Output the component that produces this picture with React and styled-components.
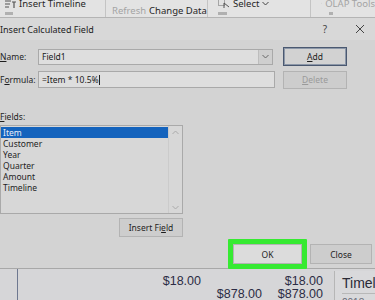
import React from "react";
import styled, { createGlobalStyle } from "styled-components";

const Global = createGlobalStyle`
  html, body { margin: 0; padding: 0; }
  body { width: 375px; height: 300px; overflow: hidden; background: #d4d4d4; }
`;

const Page = styled.div`
  width: 375px;
  height: 300px;
  overflow: hidden;
  display: flex;
  flex-direction: column;
  font-family: "Noto Sans", "DejaVu Sans", sans-serif;
  color: #1e1e1e;
`;

const Ribbon = styled.div`
  height: 17px;
  flex: none;
  display: flex;
  background: #e3e3e3;
  border-bottom: 1px solid #b4b4b4;
  overflow: hidden;
`;

const RGroup = styled.div`
  width: ${(p) => p.$w}px;
  flex: none;
  border-right: ${(p) => (p.$last ? "none" : "1px solid #c4c4c4")};
  display: flex;
  flex-direction: column;
  padding-left: ${(p) => p.$pl}px;
  box-sizing: border-box;
`;

const RLine = styled.div`
  display: flex;
  align-items: center;
  gap: 3px;
  height: 11px;
  flex: none;
  margin-top: ${(p) => p.$mt || 0}px;
  font-size: 9.5px;
  line-height: 11px;
  white-space: nowrap;
`;

const RText = styled.span`
  color: ${(p) => (p.$dim ? "#a4a4a4" : "#262626")};
`;

const MiniIcon = styled.span`
  display: inline-block;
  flex: none;
  width: ${(p) => p.$w || 9}px;
  height: 3px;
  background: #9a9a9a;
  opacity: 0.7;
  margin-left: ${(p) => p.$ml || 0}px;
  margin-top: ${(p) => p.$mt || 0}px;
`;

const Dialog = styled.div`
  flex: none;
  height: 250px;
  background: #d3d3d3;
  display: flex;
  flex-direction: column;
  border-bottom: 1px solid #a8a8a8;
`;

const TitleBar = styled.div`
  height: 22px;
  flex: none;
  display: flex;
  align-items: center;
  background: #d8d8d8;
  font-size: 9px;
  color: #222;
`;

const Title = styled.div`
  flex: 1;
`;

const TitleBtn = styled.div`
  width: ${(p) => p.$w}px;
  text-align: center;
  font-size: ${(p) => p.$fs || 10}px;
  color: #444;
  display: flex;
  justify-content: center;
`;

const Body = styled.div`
  display: flex;
  flex-direction: column;
  padding-top: 7px;
`;

const Row = styled.div`
  display: flex;
  align-items: center;
  height: ${(p) => p.$h}px;
  margin-top: ${(p) => p.$mt || 0}px;
`;

const Label = styled.div`
  width: 38px;
  flex: none;
  font-size: 8.5px;
  line-height: 11px;
  color: #1e1e1e;
  white-space: nowrap;
`;

const Field = styled.div`
  width: ${(p) => p.$w}px;
  height: ${(p) => p.$h}px;
  box-sizing: border-box;
  flex: none;
  border: 1px solid #a9a9a9;
  background: #dedede;
  display: flex;
  align-items: center;
  font-size: 8.5px;
  padding-left: 3px;
  color: #1a1a1a;
`;

const FieldText = styled.span`
  flex: 1;
`;

const Caret = styled.span`
  display: inline-block;
  width: 1px;
  height: 10px;
  background: #222;
`;

const Drop = styled.div`
  width: 13px;
  align-self: stretch;
  border-left: 1px solid #bdbdbd;
  background: #cfcfcf;
  display: flex;
  align-items: center;
  justify-content: center;
`;

const Btn = styled.div`
  width: ${(p) => p.$w}px;
  height: ${(p) => p.$h}px;
  box-sizing: border-box;
  flex: none;
  margin-left: ${(p) => p.$ml || 0}px;
  border: 1px solid ${(p) => (p.$primary ? "#4a5870" : "#b3b3b3")};
  box-shadow: ${(p) => (p.$primary ? "inset 0 0 0 1px #8c97a8" : "none")};
  background: ${(p) => p.$bg || "#cdcdcd"};
  display: flex;
  align-items: center;
  justify-content: center;
  font-size: 8.5px;
  color: ${(p) => (p.$dim ? "#9a9a9a" : "#1e1e1e")};
`;

const FieldsLabel = styled.div`
  font-size: 8.5px;
  margin-top: 22px;
  height: 11px;
  line-height: 11px;
`;

const ListBox = styled.div`
  width: 183px;
  height: 89px;
  margin-top: 3px;
  box-sizing: border-box;
  border: 1px solid #a9a9a9;
  background: #d7d7d7;
  display: flex;
`;

const ListItems = styled.div`
  flex: 1;
  padding-top: 1px;
`;

const ListItem = styled.div`
  height: 11px;
  line-height: 11px;
  font-size: 8.5px;
  padding-left: 2px;
  color: ${(p) => (p.$sel ? "#e8eef8" : "#1e1e1e")};
  background: ${(p) => (p.$sel ? "#1463bd" : "transparent")};
`;

const Scroll = styled.div`
  width: 14px;
  display: flex;
  flex-direction: column;
  justify-content: space-between;
  align-items: center;
  border-left: 1px solid #cbcbcb;
  padding: 4px 0 3px;
  box-sizing: border-box;
`;

const InsertRow = styled.div`
  width: 183px;
  display: flex;
  justify-content: flex-end;
  margin-top: 4px;
`;

const BottomRow = styled.div`
  display: flex;
  align-items: center;
  margin-top: 2px;
  padding-left: 228px;
`;

const Highlight = styled.div`
  width: 79px;
  height: 30px;
  box-sizing: border-box;
  border: 5px solid #36ea32;
  border-radius: 1px;
  display: flex;
`;

const Sheet = styled.div`
  flex: 1;
  display: flex;
  background: #d6d6d8;
`;

const Gutter = styled.div`
  width: 17px;
  flex: none;
  border-right: 1px solid #6e7890;
`;

const Cells = styled.div`
  display: grid;
  grid-template-columns: 183px 61px 61px;
  grid-auto-rows: 13px;
  padding-top: 6px;
  font-family: "Liberation Sans", Arial, sans-serif;
  font-size: 12.5px;
  color: #2c2c44;
`;

const Cell = styled.div`
  text-align: right;
  line-height: 13px;
  white-space: nowrap;
`;

const SidePanel = styled.div`
  margin-left: 11px;
  flex: 1;
  border-left: 1px solid #b6b6b6;
  background: #d9d9db;
  padding-left: 7px;
  font-family: "Liberation Sans", Arial, sans-serif;
  font-size: 14px;
  color: #2a2a36;
  display: flex;
  flex-direction: column;
  margin-top: 2px;
`;

const SideTitle = styled.div`
  height: 20px;
  line-height: 20px;
  padding-top: 2px;
  border-bottom: 1px solid #b8b8b8;
  white-space: nowrap;
`;

const SideSub = styled.div`
  font-size: 10px;
  color: #6a6a78;
  padding-top: 3px;
`;

const Chev = ({ color = "#555", up }) => (
  <svg width="7" height="5" viewBox="0 0 7 5">
    <path d={up ? "M0.5 4 L3.5 1 L6.5 4" : "M0.5 1 L3.5 4 L6.5 1"} fill="none" stroke={color} strokeWidth="1" />
  </svg>
);

const CloseIcon = () => (
  <svg width="10" height="10" viewBox="0 0 10 10">
    <path d="M1 1 L9 9 M9 1 L1 9" stroke="#444" strokeWidth="1" />
  </svg>
);

export default function App() {
  return (
    <Page>
      <Global />
      <Ribbon>
        <RGroup $w={106} $pl={5}>
          <RLine $mt={-2}>
            <svg width="11" height="9" viewBox="0 0 11 9">
              <path d="M0 2 H6 M0 5 H5 M0 8 H4" stroke="#555" strokeWidth="1" />
              <path d="M7 3 H11 M9 3 V9" stroke="#555" strokeWidth="1.2" />
            </svg>
            <RText>Insert Timeline</RText>
          </RLine>
          <MiniIcon $w={8} $mt={3} />
        </RGroup>
        <RGroup $w={102} $pl={6}>
          <RLine $mt={5}>
            <RText $dim>Refresh</RText>
            <RText>Change Data</RText>
          </RLine>
        </RGroup>
        <RGroup $w={103} $pl={10}>
          <RLine $mt={-2}>
            <svg width="12" height="9" viewBox="0 0 12 9">
              <rect x="0.5" y="0.5" width="6" height="6" fill="none" stroke="#666" strokeDasharray="1 1" />
              <path d="M6 4 L11 8 M6 4 L6 9" stroke="#555" strokeWidth="1" />
            </svg>
            <RText>Select</RText>
            <Chev color="#444" />
          </RLine>
          <MiniIcon $w={9} $mt={3} />
        </RGroup>
        <RGroup $w={64} $pl={10} $last>
          <RLine $mt={-2}>
            <svg width="10" height="9" viewBox="0 0 10 9">
              <path d="M0 2 H4 M0 5 H4 M6 1 V8 M8 3 V8" stroke="#b0b0b0" strokeWidth="1" />
            </svg>
            <RText $dim>OLAP Tools</RText>
          </RLine>
          <MiniIcon $w={4} $ml={8} $mt={3} />
        </RGroup>
      </Ribbon>
      <Dialog>
        <TitleBar>
          <Title>Insert Calculated Field</Title>
          <TitleBtn $w={16} $fs={10}>?</TitleBtn>
          <TitleBtn $w={20} />
          <TitleBtn $w={14}>
            <CloseIcon />
          </TitleBtn>
          <TitleBtn $w={8} />
        </TitleBar>
        <Body>
          <Row $h={19}>
            <Label>
              <u>N</u>ame:
            </Label>
            <Field $w={235} $h={16}>
              <FieldText>Field1</FieldText>
              <Drop>
                <Chev color="#666" />
              </Drop>
            </Field>
            <Btn $w={64} $h={19} $ml={10} $primary $bg="#d2d2d2">
              <span>
                <u>A</u>dd
              </span>
            </Btn>
          </Row>
          <Row $h={19} $mt={4}>
            <Label>
              F<u>o</u>rmula:
            </Label>
            <Field $w={237} $h={17}>
              <span>=Item * 10.5%</span>
              <Caret />
            </Field>
            <Btn $w={64} $h={18} $ml={8} $dim>
              <span>
                <u>D</u>elete
              </span>
            </Btn>
          </Row>
          <FieldsLabel>
            <u>F</u>ields:
          </FieldsLabel>
          <ListBox>
            <ListItems>
              {["Item", "Customer", "Year", "Quarter", "Amount", "Timeline"].map((t, i) => (
                <ListItem key={t} $sel={i === 0}>
                  {t}
                </ListItem>
              ))}
            </ListItems>
            <Scroll>
              <Chev color="#aaa" up />
              <Chev color="#aaa" />
            </Scroll>
          </ListBox>
          <InsertRow>
            <Btn $w={64} $h={19}>
              <span>
                Insert Fi<u>e</u>ld
              </span>
            </Btn>
          </InsertRow>
          <BottomRow>
            <Highlight>
              <Btn $w={69} $h={20} $bg="#dcdcdc">
                OK
              </Btn>
            </Highlight>
            <Btn $w={62} $h={20} $ml={3}>
              Close
            </Btn>
          </BottomRow>
        </Body>
      </Dialog>
      <Sheet>
        <Gutter />
        <Cells>
          <Cell>$18.00</Cell>
          <Cell />
          <Cell>$18.00</Cell>
          <Cell />
          <Cell>$878.00</Cell>
          <Cell>$878.00</Cell>
        </Cells>
        <SidePanel>
          <SideTitle>Timeline</SideTitle>
          <SideSub>2018</SideSub>
        </SidePanel>
      </Sheet>
    </Page>
  );
}
